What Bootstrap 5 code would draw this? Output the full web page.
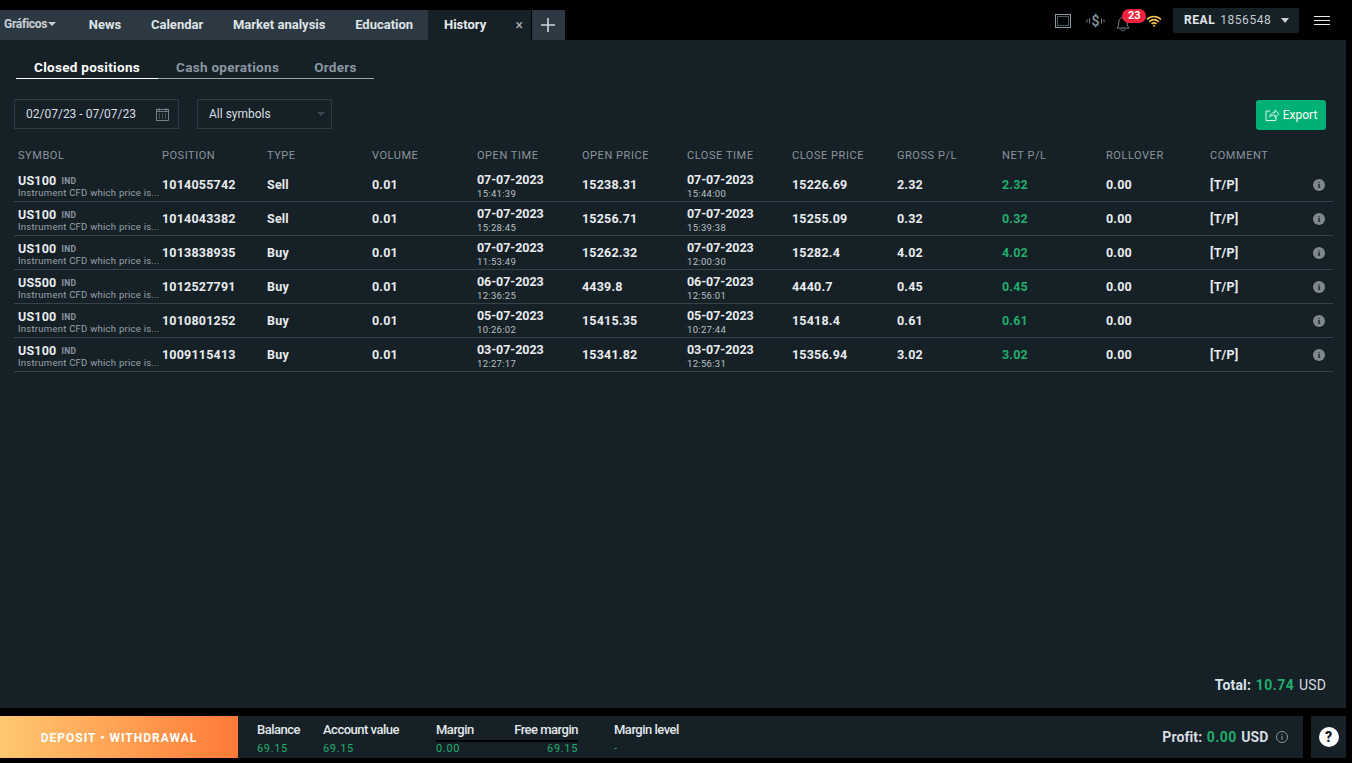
<!DOCTYPE html>
<html lang="en"><head><meta charset="utf-8"><title>History</title>
<link href="https://cdn.jsdelivr.net/npm/bootstrap@5.3.0/dist/css/bootstrap.min.css" rel="stylesheet">
<style>
html,body{height:100%}
body{background:#000;font-family:Roboto,"Liberation Sans",sans-serif;color:#e8ecef;overflow:hidden;width:1352px;height:763px;font-size:13px}
.topbar{height:40px;background:#000}
.tabstrip{padding-top:10px;height:40px}
.tabi{height:30px;background:#2c3942;color:#dfe4e8;font-weight:700;font-size:13px;line-height:30px;padding:0 14.85px}
.tabi.first{padding:0 0 0 4px;width:74px;font-size:12px;letter-spacing:-.3px;line-height:28px;color:#c9d1d6}
.tabi.act{background:#162027;color:#e8ecef;width:103px;padding-left:16px;margin-right:1px}
.tabx{font-weight:400;color:#a9b3ba;font-size:14px;right:8px;top:0}
.tabplus{width:33px;height:30px;background:#2c3942}
.caret-d{display:inline-block;border-left:4px solid transparent;border-right:4px solid transparent;border-top:4px solid #c9d1d6;vertical-align:2px;margin-left:1px}
.caret-acct{border-left-width:4.5px;border-right-width:4.5px;border-top-width:5px;vertical-align:0}
.iconrow{padding-right:22px}
.topicons{padding-top:2px}
.ic-rect{margin-right:15px}
.ic-dollar{margin-right:11px}
.ic-bell{width:14px;height:17px;margin-right:16px}
.ic-wifi{margin-right:11px}
.acct{width:126px;height:25px;background:#162027;border-radius:2px;margin:8px 15px 0 0;padding:0 10px 0 11px;font-size:12px;letter-spacing:.55px;line-height:25px;color:#c3ccd2}
.acct b{color:#e4e8ec;margin-right:5px}
.bellbadge{right:-16px;top:-4px;background:#f0243f;color:#fff;font-size:11px;font-weight:700;line-height:14px;padding:0 5.5px;border-radius:8px}
.mainpanel{width:1346px;height:668px;background:#162027;padding:20px 13px 0 14px}
.subtabs{margin:0 0 0 2px;width:358px;border-bottom:1px solid #9aa4ab;height:19px}
.subt{font-weight:700;font-size:13.5px;color:#8a97a0;line-height:15px;letter-spacing:.3px;padding-left:18px;padding-right:22px}
.subt.on{color:#fff;width:142px;padding-right:0;margin-bottom:-1px;border-bottom:1px solid #fff;height:19px}
.subt.cash{padding-left:18px;padding-right:35px}
.subt.ords{padding:0}
.filters{margin-top:20px;height:30px}
.fbox{height:30px;border:1px solid #2f3b44;font-size:12px;color:#d9dfe3;line-height:28px}
.fdate{width:165px;padding-left:11px;margin-right:18px}
.fdate svg{margin:8px 9px 0 0}
.fsym{width:135px;padding-left:11px}
.caret-s{border-left:4px solid transparent;border-right:4px solid transparent;border-top:4px solid #3a4751;right:6px;top:12px}
.exportbtn{--bs-btn-bg:#00b074;--bs-btn-border-color:#00b074;--bs-btn-color:#fff;--bs-btn-hover-bg:#00b074;--bs-btn-hover-color:#fff;--bs-btn-padding-x:8px;--bs-btn-padding-y:0;--bs-btn-font-size:12px;--bs-btn-border-radius:3px;height:30px;width:70px;line-height:31px;border:0;margin:1px 7px 0 0;white-space:nowrap}
.exportbtn svg{vertical-align:-2px;margin-right:0}
.histtable{--bs-table-bg:transparent;--bs-table-color:#e8ecef;table-layout:fixed;width:1319px;margin:14px 0 0;border-collapse:collapse}
.histtable col{width:105px}
.histtable col.c1{width:144px}
.histtable col.c2{width:104px}
.histtable col.c3{width:103px}
.histtable col.c4{width:24px}
.histtable th{font-weight:400;font-size:11px;letter-spacing:.55px;color:#8a959d;height:24px;padding:2px 0 0 4px;border:0;white-space:nowrap;vertical-align:middle}
.histtable td{height:34px;padding:3px 0 0 4px;border:0;border-bottom:1px solid #36424b;font-weight:700;font-size:12.5px;letter-spacing:.2px;vertical-align:middle;white-space:nowrap;color:#e8ecef}
.histtable td.gain{color:#21ad6b}
.sym{font-size:12.5px;line-height:13px;display:block;margin-top:2px}
.ind{font-size:8.5px;color:#8c98a1;margin-left:5px;letter-spacing:.3px;vertical-align:1px}
.sdesc{font-size:9.5px;font-weight:400;color:#98a3ab;letter-spacing:.25px;line-height:12px;display:block;margin-top:-.5px}
.dt{display:block;line-height:14px;margin-top:2px;letter-spacing:-.05px}
.tm{display:block;font-size:9.5px;font-weight:400;color:#b8c0c6;line-height:12px;letter-spacing:.3px;margin-top:1px}
.gain{color:#21ad6b}
.infodot{width:12px;height:12px;border-radius:50%;background:#80888d;color:#162027;font:700 9px/12px "Liberation Serif",serif;text-align:center;display:block;margin-top:-1px}
.totalrow{position:absolute;right:26px;top:675px;font-size:14px;color:#d6dce0;letter-spacing:.15px}
.totalrow b{font-weight:700;color:#d6e2ea}
.totalrow b.gain{color:#21ad6b;letter-spacing:.5px;margin:0 1px}
.bottombar{margin-top:8px;height:42px;width:1346px}
.depo{width:238px;height:42px;background:linear-gradient(90deg,#ffc870,#ff7a36);color:#fff;font-weight:700;font-size:12px;letter-spacing:1px;line-height:44px;text-align:center}
.stats{width:1065px;height:42px;background:#162027;padding-left:19px;margin-right:8px}
.sitem{font-size:13px;letter-spacing:-.5px;font-weight:500;color:#e3e8ec;line-height:14px;padding-top:7px;white-space:nowrap}
.sitem span{display:block;font-size:11px;letter-spacing:.65px;font-weight:400;color:#21ad6b;margin-top:5px;line-height:13px}
.s1{width:66px}.s2{width:113px}.s3{width:142px;position:relative;margin-right:36px}
.s3 i{position:absolute;left:0;right:0;top:24px;height:2px;background:#000}
.profit{font-size:14px;color:#d6dce0;padding-right:15px;line-height:42px;letter-spacing:.1px}
.profit b{font-weight:700}.profit b.gain{letter-spacing:.4px;margin:0 1px}
.profit svg{vertical-align:-1px}
.helpb{width:35px;height:42px;background:#162027}
.helpc{width:20px;height:20px;border-radius:50%;background:#fff;color:#162027;font-weight:900;font-size:14px;line-height:20px;text-align:center}
</style></head>
<body class="position-relative">
<div class="topbar d-flex justify-content-between">
  <div class="tabstrip d-flex">
    <div class="tabi first">Gráficos<span class="caret-d"></span></div>
    <div class="tabi">News</div><div class="tabi">Calendar</div><div class="tabi">Market analysis</div><div class="tabi">Education</div>
    <div class="tabi act position-relative">History<span class="tabx position-absolute">×</span></div>
    <div class="tabplus d-flex align-items-center justify-content-center"><svg width="14" height="14" viewBox="0 0 14 14"><path d="M7 0v14M0 7h14" stroke="#cfd6db" stroke-width="1.6"/></svg></div>
  </div>
  <div class="d-flex">
    <div class="d-flex align-items-center topicons">
      <svg class="ic-rect" width="16" height="14" viewBox="0 0 16 14" fill="none"><rect x=".5" y=".5" width="15" height="13" stroke="#8a97a0"/><rect x="2.5" y="2.5" width="11" height="9" stroke="#4a565f"/></svg>
      <svg class="ic-dollar" width="19" height="18" viewBox="0 0 19 18" fill="none" stroke="#77848d"><path d="M1 7.500v3M3.500 6.500v5M15.500 6.500v5M18 7.500v3"/><text x="9.500" y="13.500" text-anchor="middle" font-size="14" font-weight="500" font-family="Roboto" fill="#8a97a0" stroke="none">$</text></svg>
      <span class="position-relative d-inline-block ic-bell"><svg width="14" height="17" viewBox="0 0 14 17" fill="none" stroke="#77848d"><path d="M1 13c2-2 1.500-4 2-7 .4-2 2-3.500 4-3.500s3.600 1.500 4 3.500c.5 3 0 5 2 7zM5 13.500c0 3 4 3 4 0"/></svg><span class="bellbadge position-absolute">23</span></span>
      <svg class="ic-wifi" width="16" height="12" viewBox="0 0 16 12" fill="none" stroke="#f5c451" stroke-width="1.600"><path d="M1 4.500c4-4 10-4 14 0M3.200 6.800c3-2.800 6.600-2.800 9.600 0M5.500 9c1.500-1.300 3.500-1.300 5 0"/><circle cx="8" cy="10.800" r="1" fill="#f5c451" stroke="none"/></svg>
    </div>
    <div class="acct d-flex justify-content-between align-items-center"><span><b>REAL</b>1856548</span><span class="caret-d caret-acct"></span></div>
    <div class="d-flex align-items-center iconrow"><svg width="16" height="9" viewBox="0 0 16 9" stroke="#e8ecef"><path d="M0 .5h16M0 4.500h16M0 8.500h16"/></svg></div>
  </div>
</div>
<div class="mainpanel">
  <div class="subtabs d-flex">
    <div class="subt on">Closed positions</div><div class="subt cash">Cash operations</div><div class="subt ords">Orders</div>
  </div>
  <div class="filters d-flex">
    <div class="fbox fdate d-flex justify-content-between"><span>02/07/23 - 07/07/23</span><svg width="13" height="13" viewBox="0 0 13 13" fill="none" stroke="#8a97a0" stroke-width=".8"><rect x=".5" y="1.500" width="12" height="11"/><path d="M3 0v3M10 0v3M.5 3.500h12M3 6h1M6 6h1M9 6h1M3 8h1M6 8h1M9 8h1M3 10h1M6 10h1M9 10h1"/></svg></div>
    <div class="fbox fsym position-relative">All symbols<span class="caret-s position-absolute"></span></div>
    <div class="ms-auto"><button class="btn exportbtn" type="button"><svg width="15" height="12" viewBox="0 0 15 12" fill="none" stroke="#d8f5ea" stroke-width="1"><path d="M5 2H1v9.500h10V8M4.500 8c.5-3 3-4.500 5.500-4.500V1l4 3.800-4 3.700V6C8 6 6 6.500 4.500 8z"/></svg> Export</button></div>
  </div>
  <table class="table histtable">
    <colgroup><col class="c1"><col><col><col><col><col><col><col><col><col class="c2"><col class="c2"><col class="c3"><col class="c4"></colgroup>
    <thead><tr><th>SYMBOL</th><th>POSITION</th><th>TYPE</th><th>VOLUME</th><th>OPEN TIME</th><th>OPEN PRICE</th><th>CLOSE TIME</th><th>CLOSE PRICE</th><th>GROSS P/L</th><th>NET P/L</th><th>ROLLOVER</th><th>COMMENT</th><th></th></tr></thead>
    <tbody id="rows">
<tr><td><span class="sym">US100<span class="ind">IND</span></span><span class="sdesc">Instrument CFD which price is...</span></td><td>1014055742</td><td>Sell</td><td>0.01</td><td><span class="dt">07-07-2023</span><span class="tm">15:41:39</span></td><td>15238.31</td><td><span class="dt">07-07-2023</span><span class="tm">15:44:00</span></td><td>15226.69</td><td>2.32</td><td class="gain">2.32</td><td>0.00</td><td>[T/P]</td><td><span class="infodot">i</span></td></tr>
<tr><td><span class="sym">US100<span class="ind">IND</span></span><span class="sdesc">Instrument CFD which price is...</span></td><td>1014043382</td><td>Sell</td><td>0.01</td><td><span class="dt">07-07-2023</span><span class="tm">15:28:45</span></td><td>15256.71</td><td><span class="dt">07-07-2023</span><span class="tm">15:39:38</span></td><td>15255.09</td><td>0.32</td><td class="gain">0.32</td><td>0.00</td><td>[T/P]</td><td><span class="infodot">i</span></td></tr>
<tr><td><span class="sym">US100<span class="ind">IND</span></span><span class="sdesc">Instrument CFD which price is...</span></td><td>1013838935</td><td>Buy</td><td>0.01</td><td><span class="dt">07-07-2023</span><span class="tm">11:53:49</span></td><td>15262.32</td><td><span class="dt">07-07-2023</span><span class="tm">12:00:30</span></td><td>15282.4</td><td>4.02</td><td class="gain">4.02</td><td>0.00</td><td>[T/P]</td><td><span class="infodot">i</span></td></tr>
<tr><td><span class="sym">US500<span class="ind">IND</span></span><span class="sdesc">Instrument CFD which price is...</span></td><td>1012527791</td><td>Buy</td><td>0.01</td><td><span class="dt">06-07-2023</span><span class="tm">12:36:25</span></td><td>4439.8</td><td><span class="dt">06-07-2023</span><span class="tm">12:56:01</span></td><td>4440.7</td><td>0.45</td><td class="gain">0.45</td><td>0.00</td><td>[T/P]</td><td><span class="infodot">i</span></td></tr>
<tr><td><span class="sym">US100<span class="ind">IND</span></span><span class="sdesc">Instrument CFD which price is...</span></td><td>1010801252</td><td>Buy</td><td>0.01</td><td><span class="dt">05-07-2023</span><span class="tm">10:26:02</span></td><td>15415.35</td><td><span class="dt">05-07-2023</span><span class="tm">10:27:44</span></td><td>15418.4</td><td>0.61</td><td class="gain">0.61</td><td>0.00</td><td></td><td><span class="infodot">i</span></td></tr>
<tr><td><span class="sym">US100<span class="ind">IND</span></span><span class="sdesc">Instrument CFD which price is...</span></td><td>1009115413</td><td>Buy</td><td>0.01</td><td><span class="dt">03-07-2023</span><span class="tm">12:27:17</span></td><td>15341.82</td><td><span class="dt">03-07-2023</span><span class="tm">12:56:31</span></td><td>15356.94</td><td>3.02</td><td class="gain">3.02</td><td>0.00</td><td>[T/P]</td><td><span class="infodot">i</span></td></tr>
    </tbody>
  </table>
</div>
<div class="totalrow"><b>Total:</b> <b class="gain">10.74</b> USD</div>
<div class="bottombar d-flex">
  <div class="depo">DEPOSIT • WITHDRAWAL</div>
  <div class="stats d-flex">
    <div class="sitem s1">Balance<span>69.15</span></div>
    <div class="sitem s2">Account value<span>69.15</span></div>
    <div class="sitem s3 d-flex justify-content-between"><div>Margin<span>0.00</span></div><div class="text-end">Free margin<span>69.15</span></div><i></i></div>
    <div class="sitem">Margin level<span>-</span></div>
    <div class="profit ms-auto"><b>Profit:</b> <b class="gain">0.00</b> <b>USD</b> <svg class="ms-1" width="12" height="12" viewBox="0 0 12 12" fill="none" stroke="#8a959d"><circle cx="6" cy="6" r="5.500"/><path d="M6 5v4M6 3v1.200"/></svg></div>
  </div>
  <div class="helpb d-flex align-items-center justify-content-center"><div class="helpc">?</div></div>
</div>
</body></html>
